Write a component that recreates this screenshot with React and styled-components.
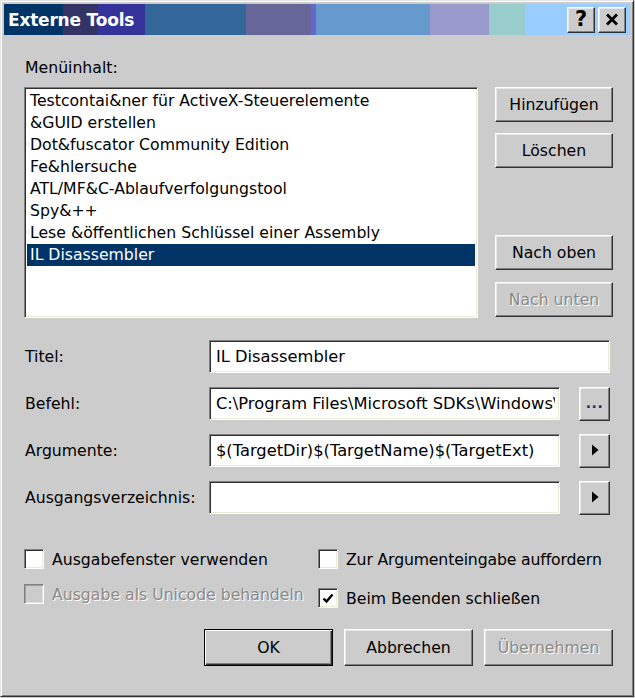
import React from 'react';
import styled, { createGlobalStyle, css } from 'styled-components';

const Global = createGlobalStyle`
  html, body { margin: 0; padding: 0; background: #cccccc; }
  body {
    font-family: "DejaVu Sans", Tahoma, Verdana, sans-serif;
    font-size: 15.7px;
    color: #000;
  }
  * { box-sizing: border-box; }
`;

const Window = styled.div`
  width: 634px;
  height: 697px;
  background: #cccccc;
  border: 1px solid;
  border-color: #e4e4e4 #303030 #303030 #e4e4e4;
  box-shadow: inset 1px 1px #ffffff, inset -1px -1px #808080;
  padding: 3px;
  display: flex;
  flex-direction: column;
`;

const TitleBar = styled.div`
  height: 31px;
  display: flex;
  align-items: center;
  padding: 0 4px 0 4px;
  background: linear-gradient(
    to right,
    #003366 0 59px,
    #333366 59px 94px,
    #333399 94px 141px,
    #336699 141px 242px,
    #666699 242px 307px,
    #6666cc 307px 312px,
    #6699cc 312px 426px,
    #9999cc 426px 485px,
    #99cccc 485px 521px,
    #99ccff 521px 100%
  );
`;

const TitleText = styled.div`
  flex: 1;
  color: #fff;
  font-weight: bold;
  font-size: 17px;
  letter-spacing: -0.2px;
`;

const bevel = css`
  background: #cccccc;
  border: 1px solid;
  border-color: #ffffff #303030 #303030 #ffffff;
  box-shadow: inset -1px -1px #808080, inset 1px 1px #e8e8e8;
`;

const CaptionButton = styled.div`
  ${bevel};
  width: 28px;
  height: 26px;
  margin-left: 3px;
  display: flex;
  align-items: center;
  justify-content: center;
  font-weight: bold;
  font-size: 21px;
  line-height: 1;
  color: #000;
`;

const Content = styled.div`
  flex: 1;
  display: flex;
  flex-direction: column;
  padding: 0 17px 0 20px;
`;

const SectionLabel = styled.div`
  margin-top: 23px;
  padding-left: 1px;
  line-height: 20px;
  height: 20px;
`;

const ListRow = styled.div`
  margin-top: 9px;
  display: flex;
  gap: 17px;
  height: 231px;
`;

const sunken = css`
  background: #ffffff;
  border: 1px solid;
  border-color: #808080 #ffffff #ffffff #808080;
  box-shadow: inset 1px 1px #303030, inset -1px -1px #ecebd8;
`;

const ListBox = styled.div`
  ${sunken};
  width: 454px;
  height: 100%;
  padding: 2px 2px;
  display: flex;
  flex-direction: column;
`;

const ListItem = styled.div`
  height: 22px;
  line-height: 22px;
  padding-left: 3px;
  white-space: nowrap;
  overflow: hidden;
  ${(p) =>
    p.$selected &&
    css`
      background: #003366;
      color: #ffffff;
    `}
`;

const ButtonColumn = styled.div`
  width: 118px;
  display: flex;
  flex-direction: column;
  justify-content: space-between;
  padding-bottom: 1px;
`;

const ButtonGroup = styled.div`
  display: flex;
  flex-direction: column;
  gap: ${(p) => p.$gap}px;
`;

const Button = styled.div`
  ${bevel};
  width: ${(p) => p.$w || 118}px;
  height: ${(p) => p.$h || 35}px;
  display: flex;
  align-items: center;
  justify-content: center;
  white-space: nowrap;
  ${(p) =>
    p.$disabled &&
    css`
      color: #8a8a8a;
      text-shadow: 1px 1px #ffffff;
    `}
  ${(p) =>
    p.$default &&
    css`
      border: 1px solid #000;
      box-shadow: inset 1px 1px #ffffff, inset -1px -1px #303030, inset -2px -2px #808080;
    `}
`;

const FormGrid = styled.div`
  margin-top: 22px;
  display: grid;
  grid-template-columns: 166px 351px 31px;
  column-gap: 19px;
  row-gap: 14px;
  grid-auto-rows: 33px;
`;

const FieldLabel = styled.div`
  display: flex;
  align-items: center;
  padding-left: 1px;
  white-space: nowrap;
`;

const TextField = styled.input`
  ${sunken};
  grid-column: ${(p) => (p.$wide ? '2 / span 2' : 'auto')};
  height: 33px;
  width: 100%;
  font: inherit;
  font-size: 16.3px;
  color: #000;
  padding: 0 4px 0 6px;
  outline: none;
  margin: 0;
`;

const SideButton = styled(Button)`
  width: 31px;
  height: 34px;
  font-size: 14px;
  font-weight: bold;
  color: #223366;
  letter-spacing: 0.5px;
  padding-bottom: 2px;
`;

const CheckGrid = styled.div`
  margin-top: 35px;
  display: grid;
  grid-template-columns: 294px 1fr;
  row-gap: 15px;
`;

const CheckItem = styled.div`
  display: flex;
  align-items: center;
  gap: 8px;
  height: 20px;
  white-space: nowrap;
  margin-top: ${(p) => p.$shift || 0}px;
  ${(p) =>
    p.$disabled &&
    css`
      color: #8a8a8a;
      text-shadow: 1px 1px #ffffff;
    `}
`;

const Box = styled.div`
  flex: none;
  width: 20px;
  height: 20px;
  border: 1px solid;
  border-color: #808080 #ffffff #ffffff #808080;
  box-shadow: inset 1px 1px #303030, inset -1px -1px #ecebd8;
  background: ${(p) => (p.$disabled ? '#cccccc' : '#ffffff')};
  display: flex;
  align-items: center;
  justify-content: center;
  ${(p) =>
    p.$disabled &&
    css`
      box-shadow: inset 1px 1px #a0a0a0, inset -1px -1px #e0e0e0;
    `}
`;

const CheckText = styled.span`
  letter-spacing: ${(p) => p.$tight ? '-0.15px' : 'normal'};
`;

const BottomRow = styled.div`
  margin-top: 21px;
  display: flex;
  justify-content: flex-end;
  gap: 11px;
`;

const Arrow = () => (
  <svg width="8" height="12" viewBox="0 0 8 12">
    <path d="M1 0.5 L7.5 6 L1 11.5 Z" fill="#000" />
  </svg>
);

const items = [
  'Testcontai&ner für ActiveX-Steuerelemente',
  '&GUID erstellen',
  'Dot&fuscator Community Edition',
  'Fe&hlersuche',
  'ATL/MF&C-Ablaufverfolgungstool',
  'Spy&++',
  'Lese &öffentlichen Schlüssel einer Assembly',
  'IL Disassembler',
];

export default function App() {
  return (
    <>
      <Global />
      <Window>
        <TitleBar>
          <TitleText>Externe Tools</TitleText>
          <CaptionButton>?</CaptionButton>
          <CaptionButton>
            <svg width="14" height="13" viewBox="0 0 14 13">
              <path d="M2 1.5 L12 11.5 M12 1.5 L2 11.5" stroke="#000" strokeWidth="2.8" />
            </svg>
          </CaptionButton>
        </TitleBar>
        <Content>
          <SectionLabel>Menüinhalt:</SectionLabel>
          <ListRow>
            <ListBox>
              {items.map((t, i) => (
                <ListItem key={t} $selected={i === items.length - 1}>
                  {t}
                </ListItem>
              ))}
            </ListBox>
            <ButtonColumn>
              <ButtonGroup $gap={11}>
                <Button>Hinzufügen</Button>
                <Button>Löschen</Button>
              </ButtonGroup>
              <ButtonGroup $gap={12}>
                <Button>Nach oben</Button>
                <Button $disabled>Nach unten</Button>
              </ButtonGroup>
            </ButtonColumn>
          </ListRow>
          <FormGrid>
            <FieldLabel>Titel:</FieldLabel>
            <TextField $wide readOnly value="IL Disassembler" />
            <FieldLabel>Befehl:</FieldLabel>
            <TextField readOnly value="C:\Program Files\Microsoft SDKs\Windows\v6.0A\bin\ildasm.exe" />
            <SideButton>...</SideButton>
            <FieldLabel>Argumente:</FieldLabel>
            <TextField readOnly value="$(TargetDir)$(TargetName)$(TargetExt)" />
            <SideButton><Arrow /></SideButton>
            <FieldLabel>Ausgangsverzeichnis:</FieldLabel>
            <TextField readOnly value="" />
            <SideButton><Arrow /></SideButton>
          </FormGrid>
          <CheckGrid>
            <CheckItem>
              <Box />
              <CheckText>Ausgabefenster verwenden</CheckText>
            </CheckItem>
            <CheckItem>
              <Box />
              <CheckText $tight>Zur Argumenteingabe auffordern</CheckText>
            </CheckItem>
            <CheckItem $disabled>
              <Box $disabled />
              <CheckText>Ausgabe als Unicode behandeln</CheckText>
            </CheckItem>
            <CheckItem $shift={4}>
              <Box>
                <svg width="12" height="11" viewBox="0 0 12 11">
                  <path d="M1.5 5.5 L4.5 8.5 L10.5 1.5" stroke="#000" strokeWidth="2.4" fill="none" />
                </svg>
              </Box>
              <CheckText>Beim Beenden schließen</CheckText>
            </CheckItem>
          </CheckGrid>
          <BottomRow>
            <Button $default $w={129} $h={37}>OK</Button>
            <Button $w={129} $h={37}>Abbrechen</Button>
            <Button $disabled $w={129} $h={37}>Übernehmen</Button>
          </BottomRow>
        </Content>
      </Window>
    </>
  );
}
